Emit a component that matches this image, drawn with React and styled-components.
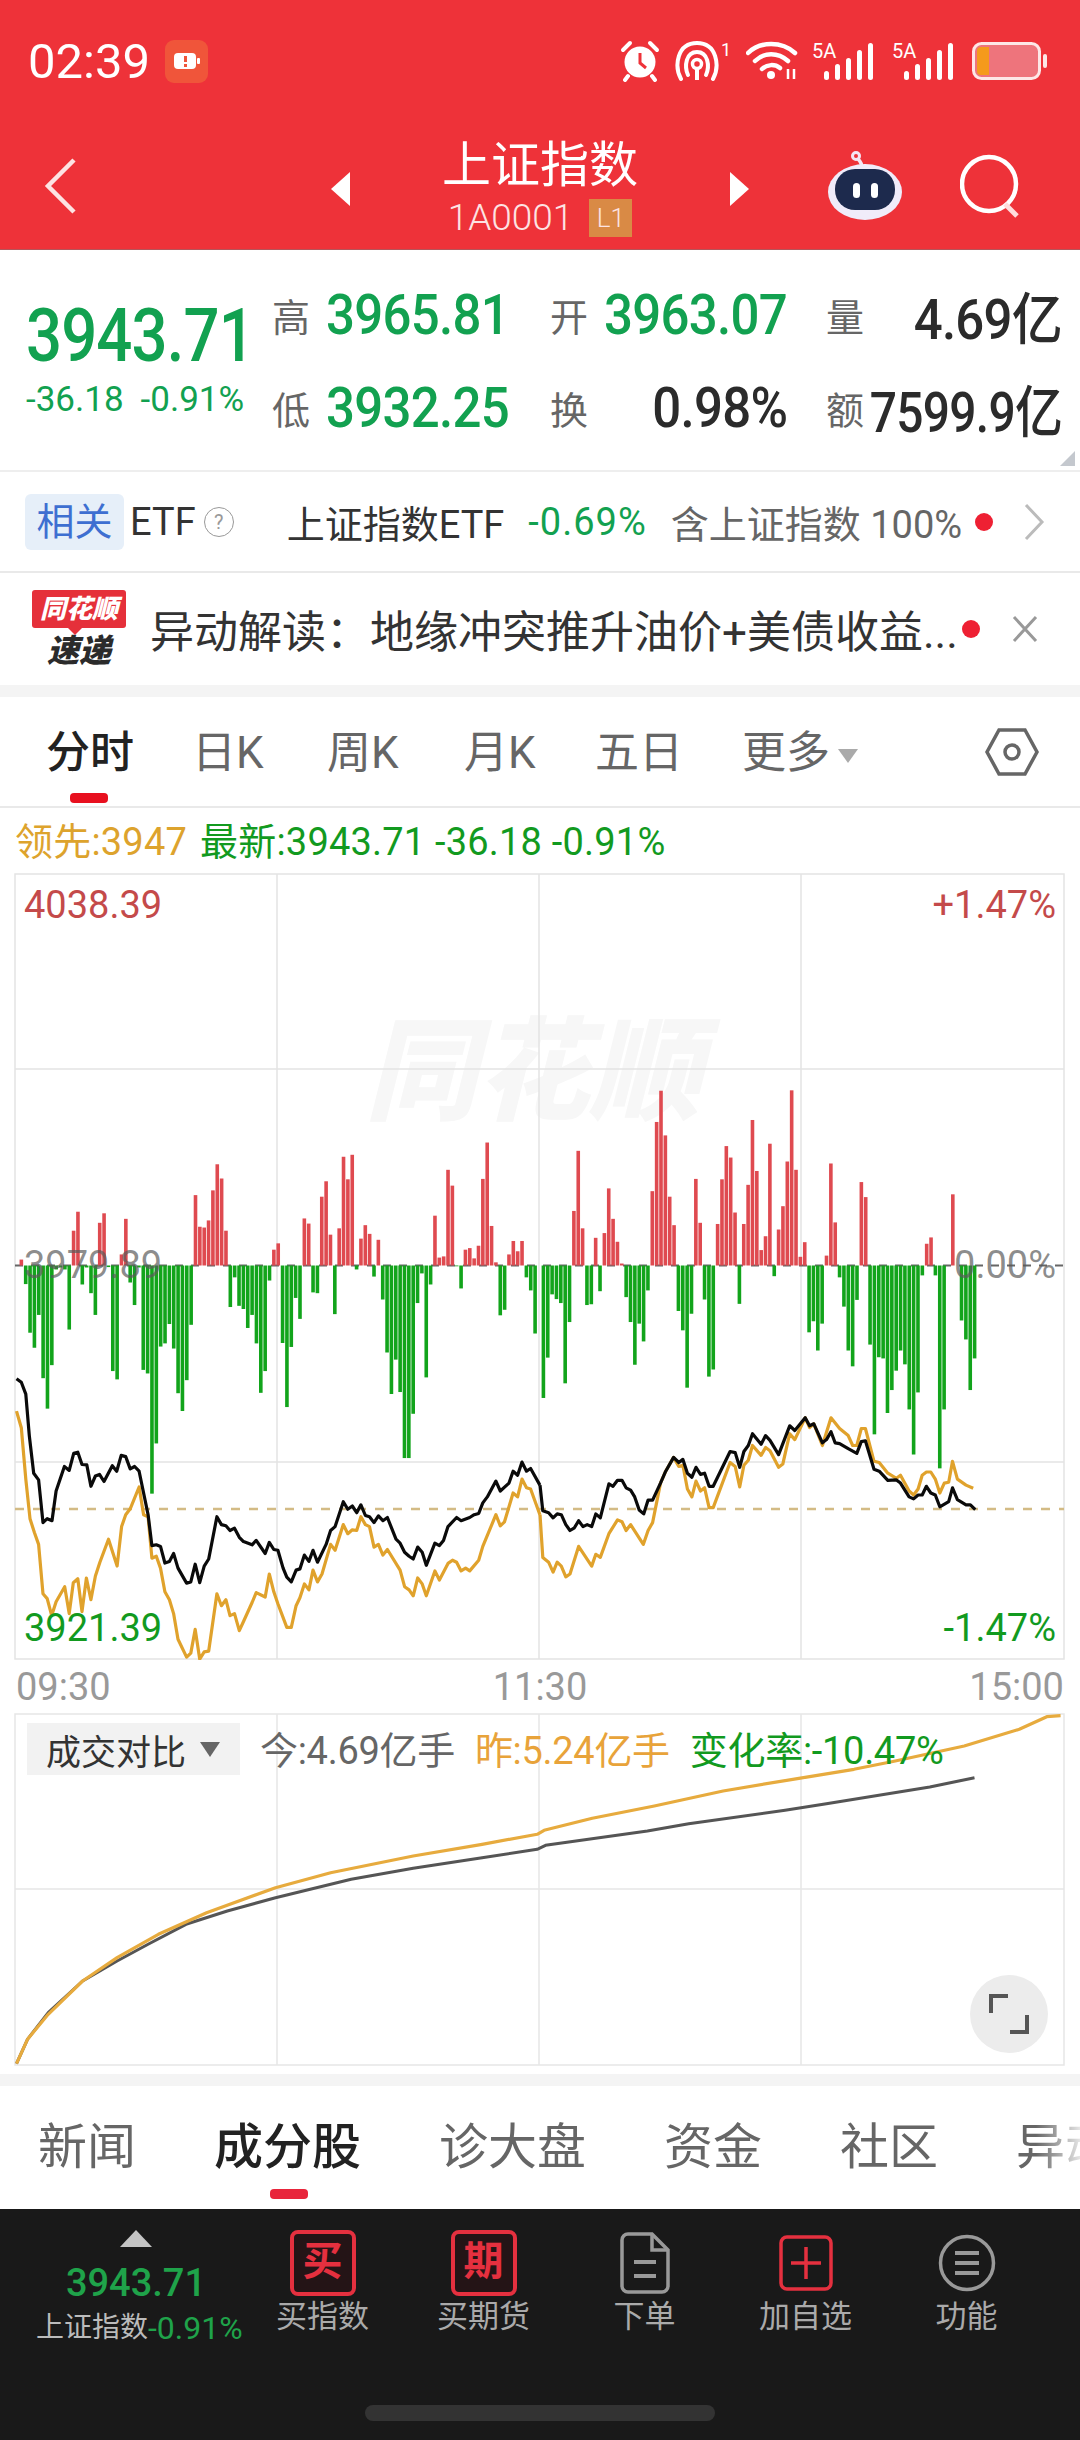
import styled, { createGlobalStyle } from "styled-components";

const RED = "#ee3239";
const GREEN = "#12a150";
const GOLD = "#e0a22c";

// bar tops read off the chart, 520 is the zero axis
const BARS_LEFT = [505,567,690,728,645,805,882,772,530,525,530,682,432,384,568,525,590,645,412,388,524,787,808,492,402,563,620,525,784,793,1097,970,725,717,668,730,843,888,810,670,342,422,424,406,330,264,300,432,625,550,622,630,678,645,717,842,787,558,480,464,716,878,726,602,655,401,414,588,590,346,307,442,643,426,245,302,240,530,452,418,440,548,455,606,740,845,758,840,1007,1007,895,615,540,803,568,394,500,497,278,318,522,578,480,476,502,470,301,209,420,512,646,632,492,458,484,458,550,583,692];
const BARS_RIGHT = [855,753,593,605,615,818,663,382,230,426,620,618,450,585,438,325,402,460,515,600,663,771,667,712,583,332,157,78,191,346,418,635,684,829,642,301,412,606,801,783,415,302,218,247,386,617,415,316,152,281,481,446,212,547,429,370,257,77,278,498,461,689,661,735,667,495,262,411,550,624,735,775,607,309,347,720,947,752,755,893,835,786,735,770,884,998,841,545,465,449,545,1033,884,520,340,520,659,707,835,755];

const BLACK_LEFT = [[48,806],[62,815],[75,845],[85,950],[98,1045],[112,1062],[125,1170],[137,1160],[151,1165],[163,1090],[187,1028],[201,1038],[214,995],[226,992],[238,1023],[252,1024],[264,1078],[277,1052],[289,1048],[302,1066],[326,1026],[339,1040],[352,1000],[365,1003],[378,1034],[391,1028],[404,1040],[417,1095],[430,1150],[441,1228],[454,1226],[466,1230],[479,1272],[492,1268],[504,1248],[517,1285],[542,1323],[554,1320],[567,1275],[580,1322],[593,1280],[606,1262],[630,1155],[643,1175],[656,1178],[668,1190],[681,1184],[695,1207],[707,1218],[732,1226],[744,1215],[770,1248],[782,1220],[795,1238],[807,1240],[822,1285],[833,1308],[846,1320],[860,1290],[871,1287],[884,1252],[897,1268],[909,1240],[922,1270],[947,1225],[960,1190],[973,1180],[997,1117],[1010,1136],[1023,1128],[1036,1145],[1048,1125],[1061,1152],[1073,1155],[1086,1170],[1099,1153],[1112,1165],[1125,1157],[1150,1212],[1162,1222],[1175,1245],[1188,1255],[1200,1262],[1213,1232],[1226,1245],[1238,1278],[1263,1222],[1276,1228],[1288,1215],[1301,1180],[1326,1157],[1339,1165],[1364,1157],[1377,1150],[1390,1147],[1402,1120],[1415,1105],[1440,1065],[1453,1090],[1478,1070],[1490,1040],[1503,1050],[1516,1017],[1529,1040],[1541,1033],[1568,1075]];
const BLACK_RIGHT = [[0,1075],[8,1140],[25,1145],[38,1158],[50,1148],[62,1150],[75,1175],[87,1190],[100,1183],[112,1165],[125,1180],[137,1175],[150,1180],[162,1148],[175,1158],[200,1072],[212,1078],[225,1063],[238,1063],[250,1082],[263,1088],[275,1105],[288,1138],[301,1148],[314,1113],[327,1113],[350,1070],[365,1040],[388,1005],[403,1018],[415,1010],[428,1045],[441,1055],[453,1030],[466,1048],[478,1045],[491,1078],[503,1078],[552,990],[567,993],[580,1030],[592,990],[605,975],[617,945],[642,972],[655,950],[668,962],[693,998],[725,925],[740,937],[770,905],[783,925],[795,920],[820,968],[832,960],[845,940],[857,968],[870,970],[895,983],[920,995],[933,965],[945,963],[970,1035],[985,1040],[1010,1063],[1035,1062],[1047,1070],[1072,1105],[1085,1110],[1098,1100],[1110,1100],[1122,1078],[1135,1095],[1148,1100],[1161,1130],[1187,1117],[1198,1082],[1212,1112],[1237,1125],[1250,1125],[1264,1137]];
const GOLD_LEFT = [[48,888],[62,930],[75,1060],[87,1160],[100,1195],[112,1225],[125,1350],[137,1362],[150,1405],[163,1370],[188,1332],[201,1400],[213,1322],[226,1312],[238,1395],[251,1310],[264,1365],[277,1305],[290,1270],[315,1212],[340,1280],[353,1180],[365,1150],[378,1135],[404,1080],[417,1150],[430,1155],[441,1260],[454,1255],[466,1285],[479,1345],[492,1365],[504,1400],[517,1465],[542,1510],[554,1500],[567,1440],[580,1515],[593,1497],[606,1495],[630,1350],[643,1380],[656,1365],[668,1405],[681,1400],[695,1443],[707,1420],[732,1372],[744,1347],[770,1358],[782,1300],[795,1345],[807,1375],[833,1435],[846,1435],[860,1380],[871,1360],[884,1325],[897,1340],[909,1290],[922,1320],[935,1300],[960,1225],[973,1240],[997,1175],[1010,1198],[1023,1188],[1036,1190],[1048,1155],[1061,1175],[1073,1180],[1086,1232],[1099,1225],[1112,1252],[1125,1238],[1162,1290],[1175,1332],[1188,1340],[1200,1355],[1213,1310],[1226,1325],[1238,1355],[1263,1292],[1276,1315],[1301,1273],[1314,1265],[1326,1270],[1339,1292],[1352,1285],[1364,1292],[1390,1265],[1402,1230],[1440,1150],[1453,1178],[1465,1168],[1490,1095],[1503,1105],[1516,1060],[1529,1082],[1541,1085],[1568,1150]];
const GOLD_RIGHT = [[0,1150],[8,1258],[25,1270],[38,1295],[50,1270],[62,1280],[75,1307],[87,1300],[112,1230],[150,1280],[162,1250],[175,1258],[200,1198],[225,1163],[238,1168],[250,1190],[263,1175],[300,1225],[314,1190],[327,1170],[350,1070],[365,1040],[388,1005],[403,1028],[415,1025],[428,1085],[441,1105],[453,1065],[466,1090],[478,1082],[491,1132],[503,1132],[552,1018],[567,1028],[580,1080],[592,1025],[605,1012],[617,975],[642,1000],[655,980],[668,988],[693,1030],[705,1022],[725,945],[740,960],[770,905],[783,930],[795,920],[820,975],[845,905],[870,932],[895,950],[908,975],[920,975],[933,932],[945,932],[970,1015],[985,1018],[1010,1045],[1035,1058],[1047,1050],[1072,1090],[1085,1100],[1098,1085],[1110,1050],[1122,1042],[1135,1042],[1148,1060],[1161,1095],[1174,1070],[1187,1068],[1198,1015],[1212,1060],[1237,1075],[1258,1083]];
const VOL_TODAY = [[24,1148],[40,1075],[70,995],[120,900],[170,840],[215,790],[270,730],[330,690],[400,650],[510,595],[600,562],[700,530],[780,505],[792,493],[940,450],[1000,428],[1140,388],[1200,368],[1350,318],[1415,290]];
const VOL_PREV = [[24,1148],[40,1075],[70,1000],[120,900],[170,830],[230,760],[300,695],[400,620],[480,575],[600,525],[700,490],[780,460],[790,448],[860,412],[950,375],[1050,330],[1160,292],[1240,265],[1300,240],[1400,195],[1480,145],[1520,107],[1540,104]];

// the measured points are in crop coordinates, turn them into chart ones
const mainPts = (pts, xOffset) =>
  pts.map(([x, y]) => `${(x / 2.904 + xOffset).toFixed(1)},${(y / 2.529 + 187).toFixed(1)}`).join(" ");
const volPts = (pts) =>
  pts.map(([x, y]) => `${(x / 1.452).toFixed(1)},${(y / 3 - 32).toFixed(1)}`).join(" ");

const GlobalStyle = createGlobalStyle`
  html, body {
    margin: 0;
    padding: 0;
    background: #fff;
  }
  body {
    width: 1080px;
    height: 2440px;
    overflow: hidden;
    font-family: Roboto, "Noto Sans CJK SC", sans-serif;
  }
`;

const Page = styled.div`
  width: 1080px;
  height: 2440px;
  display: flex;
  flex-direction: column;
  overflow: hidden;
  background: #fff;
`;

const Header = styled.header`
  height: 250px;
  background: ${RED};
  color: #fff;
  border-bottom: 1px solid #b5555a;
  box-sizing: border-box;
`;

const StatusBar = styled.div`
  height: 122px;
  padding: 0 32px 0 28px;
  display: flex;
  align-items: center;
  justify-content: space-between;
  box-sizing: border-box;
`;

const Clock = styled.div`
  display: flex;
  align-items: center;
  gap: 15px;
  font-size: 49px;
  letter-spacing: 0;
`;

const AppBadge = styled.span`
  width: 43px;
  height: 43px;
  border-radius: 9px;
  background: #f0553a;
  display: flex;
  align-items: center;
  justify-content: center;
`;

const StatusIcons = styled.div`
  display: flex;
  align-items: center;
  gap: 14px;
`;

const Nav = styled.div`
  height: 127px;
  display: grid;
  grid-template-columns: 1fr auto 1fr;
  align-items: center;
`;

const BackArrow = styled.svg`
  margin-left: 44px;
`;

const NavCenter = styled.div`
  display: flex;
  align-items: center;
  gap: 91px;
  margin-top: 6px;
`;

const NavTitle = styled.div`
  text-align: center;
  width: 196px;
`;

const TitleText = styled.div`
  font-size: 49px;
  line-height: 52px;
  white-space: nowrap;
`;

const CodeLine = styled.div`
  display: flex;
  align-items: center;
  justify-content: center;
  gap: 16px;
  font-size: 37px;
  font-weight: 300;
  line-height: 38px;
  margin-top: 7px;
  color: #fde3e3;
  white-space: nowrap;
`;

const LevelBadge = styled.span`
  width: 43px;
  height: 38px;
  background: #d98a45;
  font-size: 26px;
  line-height: 38px;
  text-align: center;
`;

const NavRight = styled.div`
  display: flex;
  justify-content: flex-end;
  align-items: center;
  gap: 57px;
  padding-right: 58px;
`;

const Summary = styled.section`
  position: relative;
  height: 222px;
  display: flex;
  border-bottom: 2px solid #eee;
  box-sizing: border-box;
`;

const PriceCol = styled.div`
  width: 272px;
  padding: 45px 0 0 26px;
  box-sizing: border-box;
`;

const BigPrice = styled.div`
  color: ${GREEN};
  font-size: 74px;
  line-height: 82px;
  font-weight: 500;
  letter-spacing: -1px;
  white-space: nowrap;
  transform: scaleX(0.857);
  transform-origin: left center;
`;

const PriceChange = styled.div`
  display: flex;
  gap: 17px;
  color: ${GREEN};
  font-size: 35px;
  line-height: 36px;
  margin-top: 5px;
  white-space: nowrap;
`;

const StatGrid = styled.div`
  display: grid;
  grid-template-columns: 278px 276px 236px;
  grid-auto-rows: 93px;
  padding-top: 18px;
`;

const Stat = styled.div`
  display: flex;
  align-items: center;
  justify-content: space-between;
  padding-right: ${(p) => p.$pad || 0}px;
`;

const StatLabel = styled.span`
  flex: none;
  font-size: 38px;
  color: #666;
`;

const StatValue = styled.span`
  flex: none;
  margin-left: -40px;
  font-size: 56px;
  font-weight: 500;
  letter-spacing: -0.8px;
  color: ${(p) => (p.$up ? GREEN : "#2b2b2b")};
  white-space: nowrap;
  transform: scaleX(${(p) => (p.$tight ? 0.855 : 0.91)});
  transform-origin: right center;
`;

const CornerMark = styled.span`
  position: absolute;
  right: 5px;
  bottom: 4px;
  width: 0;
  height: 0;
  border-left: 15px solid transparent;
  border-bottom: 15px solid #c4c8ce;
`;

const EtfRow = styled.div`
  height: 101px;
  display: flex;
  align-items: center;
  padding-left: 25px;
  border-bottom: 2px solid #e9e9e9;
  box-sizing: border-box;
  font-size: 38px;
  color: #333;
  white-space: nowrap;
`;

const Chip = styled.span`
  width: 99px;
  height: 56px;
  border-radius: 6px;
  background: #e6eff9;
  color: #3e6fd1;
  font-size: 38px;
  line-height: 56px;
  text-align: center;
`;

const EtfName = styled.span`
  margin-left: 6px;
`;

const HelpMark = styled.span`
  width: 28px;
  height: 28px;
  margin-left: 8px;
  border: 1.5px solid #999;
  border-radius: 50%;
  color: #999;
  font-size: 20px;
  line-height: 28px;
  text-align: center;
`;

const EtfTitle = styled.span`
  margin-left: 53px;
  color: #333;
`;

const EtfChange = styled.span`
  margin-left: 24px;
  color: ${GREEN};
  letter-spacing: 1px;
`;

const EtfHolding = styled.span`
  margin-left: 24px;
  color: #666;
`;

const ChevronIcon = styled.svg`
  margin-left: 30px;
`;

const Dot = styled.span`
  width: 18px;
  height: 18px;
  margin-left: ${(p) => p.$left || 0}px;
  border-radius: 50%;
  background: #ee2033;
  flex: none;
`;

const NewsRow = styled.div`
  height: 112px;
  display: flex;
  align-items: center;
  padding-left: 32px;
  box-sizing: border-box;
`;

const Logo = styled.div`
  width: 94px;
  flex: none;
  text-align: center;
  font-style: italic;
  font-weight: 900;
`;

const LogoTag = styled.div`
  position: relative;
  height: 38px;
  background: #e5303a;
  border-radius: 3px;
  color: #fff;
  font-size: 26px;
  line-height: 38px;
  white-space: nowrap;
  &::after {
    content: "";
    position: absolute;
    left: 36px;
    bottom: -7px;
    border-left: 7px solid transparent;
    border-right: 7px solid transparent;
    border-top: 7px solid #e5303a;
  }
`;

const LogoSub = styled.div`
  font-size: 32px;
  line-height: 36px;
  margin-top: 5px;
  color: #2b2b2b;
`;

const NewsText = styled.div`
  width: 812px;
  flex: none;
  margin-left: 24px;
  font-size: 44px;
  color: #333;
  white-space: nowrap;
  overflow: hidden;
`;

const CloseIcon = styled.svg`
  margin-left: 32px;
`;

const Band = styled.div`
  height: ${(p) => p.$h}px;
  background: #f4f4f4;
  flex: none;
`;

const PeriodTabs = styled.nav`
  position: relative;
  height: 111px;
  display: grid;
  grid-template-columns: 146px 135px 137px 131px 147px auto;
  align-items: center;
  padding: 0 0 6px 46px;
  border-bottom: 2px solid #e9e9e9;
  box-sizing: border-box;
`;

const PeriodTab = styled.span`
  position: relative;
  font-size: 44px;
  color: ${(p) => (p.$active ? "#222" : "#666")};
  font-weight: ${(p) => (p.$active ? 500 : 400)};
  white-space: nowrap;
  ${(p) =>
    p.$active &&
    `&::after {
      content: "";
      position: absolute;
      left: 24px;
      bottom: -22px;
      width: 38px;
      height: 10px;
      border-radius: 4px;
      background: #e8101f;
    }`}
`;

const Caret = styled.span`
  display: inline-block;
  margin-left: 8px;
  vertical-align: middle;
  border-left: 10px solid transparent;
  border-right: 10px solid transparent;
  border-top: 14px solid #aaa;
`;

const SettingsIcon = styled.svg`
  position: absolute;
  right: 41px;
  top: 30px;
`;

const Legend = styled.div`
  height: 65px;
  display: flex;
  align-items: center;
  gap: 13px;
  padding: 0 0 5px 15px;
  box-sizing: border-box;
  font-size: 38px;
  white-space: nowrap;
`;

const LegendPart = styled.span`
  color: ${(p) => p.$color};
  letter-spacing: 0.2px;
`;

const ChartBox = styled.div`
  position: relative;
  height: 787px;
  flex: none;
`;

// positioned so the bars paint over the watermark
const ChartSvg = styled.svg`
  display: block;
  position: relative;
`;

const Watermark = styled.div`
  position: absolute;
  left: 365px;
  top: 135px;
  color: #f7f7f7;
  font-size: 112px;
  line-height: 130px;
  font-weight: 900;
  font-style: italic;
  white-space: nowrap;
`;

const AxisLabel = styled.span`
  position: absolute;
  ${(p) => (p.$right ? "right: 24px;" : "left: 24px;")}
  top: ${(p) => p.$top}px;
  color: ${(p) => p.$color};
  font-size: 38px;
  line-height: 44px;
  white-space: nowrap;
`;

const TimeAxis = styled.div`
  height: 53px;
  display: flex;
  justify-content: space-between;
  align-items: center;
  padding: 0 16px;
  color: #999;
  font-size: 38px;
  box-sizing: border-box;
`;

const VolumeBox = styled.div`
  position: relative;
  height: 361px;
  flex: none;
`;

const VolumeHead = styled.div`
  position: absolute;
  left: 27px;
  top: 10px;
  display: flex;
  align-items: center;
  gap: 20px;
  font-size: 38px;
  white-space: nowrap;
`;

const VolumeChip = styled.span`
  width: 213px;
  height: 52px;
  padding-left: 19px;
  display: flex;
  align-items: center;
  gap: 14px;
  background: #f2f2f2;
  color: #333;
  font-size: 35px;
  box-sizing: border-box;
`;

const DarkCaret = styled.span`
  border-left: 10px solid transparent;
  border-right: 10px solid transparent;
  border-top: 15px solid #666;
`;

const VolumeText = styled.span`
  color: ${(p) => p.$color};
  letter-spacing: -0.3px;
  margin-top: -4px;
`;

const ExpandButton = styled.span`
  position: absolute;
  left: 970px;
  top: 262px;
  width: 78px;
  height: 78px;
  border-radius: 50%;
  background: #ececec;
  display: flex;
  align-items: center;
  justify-content: center;
`;

const SectionTabs = styled.nav`
  position: relative;
  height: 123px;
  display: flex;
  align-items: center;
  gap: 78px;
  padding: 0 0 10px 38px;
  box-sizing: border-box;
  overflow: hidden;
  white-space: nowrap;
`;

const SectionTab = styled.span`
  position: relative;
  flex: none;
  font-size: 49px;
  color: ${(p) => (p.$active ? "#222" : "#666")};
  font-weight: ${(p) => (p.$active ? 500 : 400)};
  ${(p) => p.$fade && "mask-image: linear-gradient(90deg, #000 20%, transparent 75%);"}
  ${(p) =>
    p.$active &&
    `&::after {
      content: "";
      position: absolute;
      left: 56px;
      bottom: -21px;
      width: 38px;
      height: 10px;
      border-radius: 4px;
      background: #e8253b;
    }`}
`;

const BottomBar = styled.footer`
  position: relative;
  flex: 1;
  background: #191919;
  display: flex;
  align-items: flex-start;
`;

const Quote = styled.div`
  width: 242px;
  padding: 21px 0 0 36px;
  box-sizing: border-box;
  text-align: center;
  white-space: nowrap;
`;

const UpTriangle = styled.span`
  display: block;
  width: 0;
  margin: 0 0 0 84px;
  border-left: 16px solid transparent;
  border-right: 16px solid transparent;
  border-bottom: 17px solid #c4c4c4;
`;

const QuotePrice = styled.div`
  margin-top: 13px;
  padding-right: 6px;
  color: #1fa34a;
  font-size: 38px;
  line-height: 46px;
  font-weight: 500;
`;

const QuoteLine = styled.div`
  display: flex;
  align-items: center;
  margin-top: 4px;
  font-size: 28px;
  line-height: 36px;
  color: #bbb;
`;

const QuoteChange = styled.span`
  color: #1fa34a;
  font-size: 32px;
`;

const Action = styled.div`
  width: 161px;
  flex: none;
  display: flex;
  flex-direction: column;
  align-items: center;
  color: #aaa;
  font-size: 31px;
`;

const ActionIcon = styled.div`
  height: 67px;
  margin-top: 20px;
  display: flex;
  align-items: center;
  justify-content: center;
`;

const ActionBox = styled.span`
  width: 58px;
  height: 58px;
  border: 4px solid #e5303f;
  border-radius: 8px;
  background: #241416;
  color: #e5303f;
  font-size: 40px;
  font-weight: 700;
  line-height: 56px;
  text-align: center;
`;

const ActionLabel = styled.span`
  margin-top: 2px;
  line-height: 38px;
`;

const HomePill = styled.span`
  position: absolute;
  left: 365px;
  top: 196px;
  width: 350px;
  height: 16px;
  border-radius: 8px;
  background: #333;
`;

const Signal = () => (
  <svg width="66" height="42" viewBox="0 0 66 42">
    <text x="0" y="18" fill="#fff" fontSize="20" fontFamily="Roboto, sans-serif">5A</text>
    <g fill="#fff">
      <rect x="12" y="31" width="5" height="9" rx="2.5" />
      <rect x="23" y="24" width="5" height="16" rx="2.5" />
      <rect x="34" y="18" width="5" height="22" rx="2.5" />
      <rect x="45" y="10" width="5" height="30" rx="2.5" />
      <rect x="56" y="3" width="5" height="37" rx="2.5" />
    </g>
  </svg>
);

const Alarm = () => (
  <svg width="40" height="42" viewBox="0 0 40 42">
    <circle cx="20" cy="22" r="15.5" fill="#fff" />
    <path d="M20 13v10l6 5" stroke={RED} strokeWidth="3" fill="none" />
    <path d="M3 10 10 3M37 10 30 3" stroke="#fff" strokeWidth="4" strokeLinecap="round" />
    <path d="M8 36 5 40M32 36 35 40" stroke="#fff" strokeWidth="4" strokeLinecap="round" />
  </svg>
);

const Hotspot = () => (
  <svg width="58" height="42" viewBox="0 0 58 42">
    <g fill="none" stroke="#fff" strokeWidth="4" strokeLinecap="round">
      <path d="M7 39C0 26 3 3 23 3s23 23 16 36" />
      <path d="M14 35C10 26 12 12 23 12s13 14 9 23" />
    </g>
    <circle cx="23" cy="24" r="4.5" fill="none" stroke="#fff" strokeWidth="3.5" />
    <rect x="21" y="27" width="4" height="13" fill="#fff" />
    <text x="47" y="16" fill="#fff" fontSize="18" fontFamily="Roboto, sans-serif">1</text>
  </svg>
);

const Wifi = () => (
  <svg width="52" height="40" viewBox="0 0 52 40">
    <g fill="none" stroke="#fff" strokeWidth="4.5" strokeLinecap="round">
      <path d="M2 12C14 0 36 0 49 12" />
      <path d="M9 20C18 11 32 11 42 20" />
      <path d="M16 28C21 23 29 23 34 27" />
    </g>
    <circle cx="25" cy="34" r="4" fill="#fff" />
    <path d="M42 28v10M48 28v10" stroke="#fff" strokeWidth="2.5" />
  </svg>
);

const Battery = () => (
  <svg width="76" height="38" viewBox="0 0 76 38">
    <rect x="1.5" y="1.5" width="66" height="35" rx="8" fill="#ee747c" stroke="#fde7e7" strokeWidth="3" />
    <path d="M5 9a4 4 0 0 1 4-4h8v28H9a4 4 0 0 1-4-4z" fill="#f59a1c" />
    <rect x="71" y="12" width="4" height="14" rx="2" fill="#fde7e7" />
  </svg>
);

const Robot = () => (
  <svg width="76" height="70" viewBox="0 0 76 70">
    <circle cx="29" cy="5" r="3.5" fill="none" stroke="#f4e6f4" strokeWidth="3" />
    <path d="M31 8c3 3 4 5 4 9" fill="none" stroke="#f4e6f4" strokeWidth="3.5" />
    <ellipse cx="38" cy="41" rx="37" ry="28" fill="#f0ecfa" />
    <rect x="8" y="18" width="60" height="41" rx="20" fill="#1d2a4d" />
    <rect x="26" y="32" width="7" height="15" rx="3.5" fill="#fff" />
    <rect x="44" y="32" width="7" height="15" rx="3.5" fill="#fff" />
  </svg>
);

const Search = () => (
  <svg width="62" height="64" viewBox="0 0 62 64">
    <circle cx="29" cy="30" r="27" fill="none" stroke="#fff" strokeWidth="4.5" />
    <path d="M45 50 57 62" stroke="#fdd" strokeWidth="5" />
  </svg>
);

function MainChart() {
  const barsLeft = BARS_LEFT.map((top, i) => ({
    top,
    x: 21.35 + (i * (535.1 - 21.35)) / (BARS_LEFT.length - 1),
  }));
  const barsRight = BARS_RIGHT.map((top, i) => ({
    top,
    x: 543.4 + (i * (974.6 - 543.4)) / (BARS_RIGHT.length - 1),
  }));

  return (
    <ChartSvg width="1080" height="787" viewBox="0 0 1080 787">
      <g stroke="#e4e4e4" strokeWidth="1.5">
        <path d="M15 1V786H1064V1Z" fill="none" />
        <path d="M15 196H1064M15 589H1064" />
        <path d="M277 1V786M539 1V786M801 1V786" />
      </g>
      <path d="M15 392.5H1064" stroke="#666" strokeWidth="2" strokeDasharray="8 8" />
      <path d="M15 636H1064" stroke="#d3bb85" strokeWidth="2.5" strokeDasharray="9 9" />
      {[...barsLeft, ...barsRight].map(({ top, x }, i) => {
        const h = (top - 520) / 2.529;
        if (h === 0) return null;
        return (
          <rect
            key={i}
            x={x - 1.8}
            y={h > 0 ? 392.5 : 392.5 + h}
            width="3.6"
            height={Math.abs(h)}
            fill={h > 0 ? "#12a41b" : "#df4a50"}
          />
        );
      })}
      <g fill="none" strokeLinejoin="round" strokeWidth="3.2">
        <polyline points={mainPts(GOLD_LEFT, 0)} stroke={GOLD} />
        <polyline points={mainPts(GOLD_RIGHT, 540)} stroke={GOLD} />
        <polyline points={mainPts(BLACK_LEFT, 0)} stroke="#0a0a0a" />
        <polyline points={mainPts(BLACK_RIGHT, 540)} stroke="#0a0a0a" />
      </g>
    </ChartSvg>
  );
}

function VolumeChart() {
  return (
    <ChartSvg width="1080" height="361" viewBox="0 0 1080 361">
      <g stroke="#e6e6e6" strokeWidth="1.5">
        <path d="M15 1H1064V352H15Z" fill="none" />
        <path d="M15 176H1064" />
        <path d="M277 1V352M539 1V352M801 1V352" />
      </g>
      <g fill="none" strokeLinejoin="round">
        <polyline points={volPts(VOL_TODAY)} stroke="#555" strokeWidth="3" />
        <polyline points={volPts(VOL_PREV)} stroke="#e7ab3e" strokeWidth="3.2" />
      </g>
    </ChartSvg>
  );
}

export default function App() {
  return (
    <Page>
      <GlobalStyle />
      <Header>
        <StatusBar>
          <Clock>
            02:39
            <AppBadge>
              <svg width="26" height="16" viewBox="0 0 26 16">
                <rect width="22" height="16" rx="4" fill="#fff" />
                <rect x="23" y="5" width="3" height="6" rx="1" fill="#fff" />
                <rect x="10" y="3" width="3" height="6" fill="#f0553a" />
                <rect x="10" y="11" width="3" height="3" fill="#f0553a" />
              </svg>
            </AppBadge>
          </Clock>
          <StatusIcons>
            <Alarm />
            <Hotspot />
            <Wifi />
            <Signal />
            <Signal />
            <Battery />
          </StatusIcons>
        </StatusBar>
        <Nav>
          <BackArrow width="36" height="58" viewBox="0 0 36 58">
            <path d="M30 3 4 29l26 26" fill="none" stroke="#fde3e3" strokeWidth="4.5" />
          </BackArrow>
          <NavCenter>
            <svg width="20" height="34" viewBox="0 0 20 34"><path d="M19 0V34L0 17Z" fill="#fff" /></svg>
            <NavTitle>
              <TitleText>上证指数</TitleText>
              <CodeLine>
                1A0001
                <LevelBadge>L1</LevelBadge>
              </CodeLine>
            </NavTitle>
            <svg width="20" height="34" viewBox="0 0 20 34"><path d="M1 0V34L20 17Z" fill="#fff" /></svg>
          </NavCenter>
          <NavRight>
            <Robot />
            <Search />
          </NavRight>
        </Nav>
      </Header>

      <Summary>
        <PriceCol>
          <BigPrice>3943.71</BigPrice>
          <PriceChange>
            <span>-36.18</span>
            <span>-0.91%</span>
          </PriceChange>
        </PriceCol>
        <StatGrid>
          <Stat $pad={41}><StatLabel>高</StatLabel><StatValue $up>3965.81</StatValue></Stat>
          <Stat $pad={39}><StatLabel>开</StatLabel><StatValue $up>3963.07</StatValue></Stat>
          <Stat><StatLabel>量</StatLabel><StatValue>4.69亿</StatValue></Stat>
          <Stat $pad={41}><StatLabel>低</StatLabel><StatValue $up>3932.25</StatValue></Stat>
          <Stat $pad={39}><StatLabel>换</StatLabel><StatValue>0.98%</StatValue></Stat>
          <Stat><StatLabel>额</StatLabel><StatValue $tight>7599.9亿</StatValue></Stat>
        </StatGrid>
        <CornerMark />
      </Summary>

      <EtfRow>
        <Chip>相关</Chip>
        <EtfName>ETF</EtfName>
        <HelpMark>?</HelpMark>
        <EtfTitle>上证指数ETF</EtfTitle>
        <EtfChange>-0.69%</EtfChange>
        <EtfHolding>含上证指数 100%</EtfHolding>
        <Dot $left={13} />
        <ChevronIcon width="22" height="40" viewBox="0 0 22 40">
          <path d="M3 3 19 20 3 37" fill="none" stroke="#bbb" strokeWidth="3" />
        </ChevronIcon>
      </EtfRow>

      <NewsRow>
        <Logo>
          <LogoTag>同花顺</LogoTag>
          <LogoSub>速递</LogoSub>
        </Logo>
        <NewsText>异动解读：地缘冲突推升油价+美债收益...</NewsText>
        <Dot />
        <CloseIcon width="26" height="28" viewBox="0 0 26 28">
          <path d="M2 2 24 26M24 2 2 26" stroke="#999" strokeWidth="3" />
        </CloseIcon>
      </NewsRow>
      <Band $h={12} />

      <PeriodTabs>
        <PeriodTab $active>分时</PeriodTab>
        <PeriodTab>日K</PeriodTab>
        <PeriodTab>周K</PeriodTab>
        <PeriodTab>月K</PeriodTab>
        <PeriodTab>五日</PeriodTab>
        <PeriodTab>更多<Caret /></PeriodTab>
        <SettingsIcon width="54" height="50" viewBox="0 0 54 50">
          <path d="M14 3H40L52 25 40 47H14L2 25Z" fill="none" stroke="#666" strokeWidth="3.5" />
          <circle cx="27" cy="25" r="7" fill="none" stroke="#666" strokeWidth="3.5" />
        </SettingsIcon>
      </PeriodTabs>

      <Legend>
        <LegendPart $color="#dda32d">领先:3947</LegendPart>
        <LegendPart $color="#129a1f">最新:3943.71 -36.18 -0.91%</LegendPart>
      </Legend>

      <ChartBox>
        <Watermark>同花顺</Watermark>
        <MainChart />
        <AxisLabel $top={10} $color="#c44a4a">4038.39</AxisLabel>
        <AxisLabel $top={10} $right $color="#c44a4a">+1.47%</AxisLabel>
        <AxisLabel $top={370} $color="rgba(90,90,90,0.7)">3979.89</AxisLabel>
        <AxisLabel $top={370} $right $color="rgba(90,90,90,0.7)">0.00%</AxisLabel>
        <AxisLabel $top={733} $color="#129a1f">3921.39</AxisLabel>
        <AxisLabel $top={733} $right $color="#129a1f">-1.47%</AxisLabel>
      </ChartBox>

      <TimeAxis>
        <span>09:30</span>
        <span>11:30</span>
        <span>15:00</span>
      </TimeAxis>

      <VolumeBox>
        <VolumeChart />
        <VolumeHead>
          <VolumeChip>成交对比<DarkCaret /></VolumeChip>
          <VolumeText $color="#666">今:4.69亿手</VolumeText>
          <VolumeText $color="#e8a33a">昨:5.24亿手</VolumeText>
          <VolumeText $color="#129a1f">变化率:-10.47%</VolumeText>
        </VolumeHead>
        <ExpandButton>
          <svg width="42" height="42" viewBox="0 0 42 42">
            <path d="M3 20V3H20M39 22V39H22" fill="none" stroke="#555" strokeWidth="4" />
          </svg>
        </ExpandButton>
      </VolumeBox>
      <Band $h={12} />

      <SectionTabs>
        <SectionTab>新闻</SectionTab>
        <SectionTab $active>成分股</SectionTab>
        <SectionTab>诊大盘</SectionTab>
        <SectionTab>资金</SectionTab>
        <SectionTab>社区</SectionTab>
        <SectionTab $fade>异动</SectionTab>
      </SectionTabs>

      <BottomBar>
        <Quote>
          <UpTriangle />
          <QuotePrice>3943.71</QuotePrice>
          <QuoteLine>
            上证指数
            <QuoteChange>-0.91%</QuoteChange>
          </QuoteLine>
        </Quote>
        <Action>
          <ActionIcon><ActionBox>买</ActionBox></ActionIcon>
          <ActionLabel>买指数</ActionLabel>
        </Action>
        <Action>
          <ActionIcon><ActionBox>期</ActionBox></ActionIcon>
          <ActionLabel>买期货</ActionLabel>
        </Action>
        <Action>
          <ActionIcon>
            <svg width="50" height="62" viewBox="0 0 50 62">
              <path d="M8 2H32L48 18V54a6 6 0 0 1-6 6H8a6 6 0 0 1-6-6V8a6 6 0 0 1 6-6Z" fill="none" stroke="#999" strokeWidth="3.5" />
              <path d="M32 2V18H48" fill="none" stroke="#999" strokeWidth="3.5" />
              <path d="M14 30H36M14 44H36" stroke="#999" strokeWidth="4" />
            </svg>
          </ActionIcon>
          <ActionLabel>下单</ActionLabel>
        </Action>
        <Action>
          <ActionIcon>
            <svg width="54" height="56" viewBox="0 0 54 56">
              <rect x="2" y="2" width="50" height="52" rx="6" fill="none" stroke="#e5303f" strokeWidth="3.5" />
              <path d="M27 12V44M12 28H42" stroke="#e5303f" strokeWidth="3.5" />
            </svg>
          </ActionIcon>
          <ActionLabel>加自选</ActionLabel>
        </Action>
        <Action>
          <ActionIcon>
            <svg width="58" height="58" viewBox="0 0 58 58">
              <circle cx="29" cy="29" r="26.5" fill="none" stroke="#999" strokeWidth="3.5" />
              <path d="M17 19H41M17 29H41M17 39H41" stroke="#999" strokeWidth="4" />
            </svg>
          </ActionIcon>
          <ActionLabel>功能</ActionLabel>
        </Action>
        <HomePill />
      </BottomBar>
    </Page>
  );
}
